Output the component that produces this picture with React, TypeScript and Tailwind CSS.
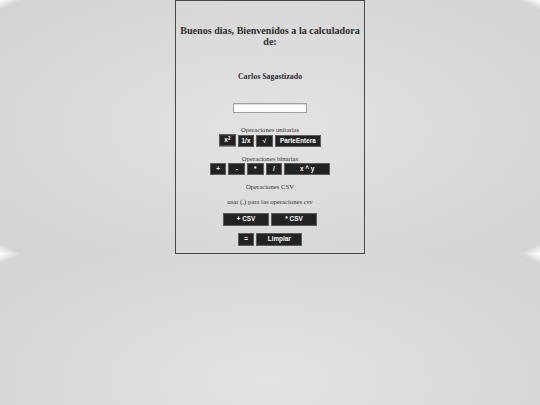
import React from "react";

const btn =
  "inline-flex items-center justify-center h-[12.6px] bg-[#222] border border-[#5c5c5c] text-white font-bold text-[6.4px] leading-none font-['Liberation_Sans',Arial,sans-serif]";

function Boton({
  ancho,
  extra = "",
  children,
}: {
  ancho: "chico" | "grande";
  extra?: string;
  children: React.ReactNode;
}) {
  return (
    <button
      type="button"
      className={(ancho === "chico" ? btn + " w-[16.6px]" : btn + " w-[46px]") + " " + extra}
    >
      {children}
    </button>
  );
}

export default function App() {
  return (
    <div className="min-h-screen w-full bg-[radial-gradient(#e3e3e3,#d4d4d4_96%,#ffffff)] bg-[length:100%_254px] font-['Liberation_Serif','Times_New_Roman',serif] text-[#2e2e2e]">
      <div className="mx-auto flex w-[190px] flex-col items-center border border-[#474747] pb-[7.6px] text-center">
        <h2 className="mt-[23.8px] px-[4px] text-[10.1px] font-bold leading-[11.6px]">
          Buenos dias, Bienvenidos a la calculadora de:
        </h2>

        <h3 className="mt-[24.2px] text-[7.9px] font-bold leading-[9px]">Carlos Sagastizado</h3>

        <input
          type="text"
          className="mt-[21.8px] h-[9.7px] w-[74.7px] border border-[#a0a0a0] bg-white shadow-[inset_0_0.5px_1px_rgba(0,0,0,0.25)] outline-none"
        />

        <p className="mt-[13.3px] text-[6.7px] leading-[7.7px] text-[#333]">Operaciones unitarias</p>
        <div className="mt-[1px] flex h-[12.6px] items-start justify-center gap-[2px] leading-none">
          <Boton ancho="chico" extra="-translate-y-[0.7px]">
            x<sup className="relative -top-[1.2px] text-[4.5px] leading-none">2</sup>
          </Boton>
          <Boton ancho="chico">1/x</Boton>
          <Boton ancho="chico">√</Boton>
          <Boton ancho="grande">ParteEntera</Boton>
        </div>

        <p className="mt-[7.4px] text-[6.7px] leading-[7.7px] text-[#333]">Operaciones binarias</p>
        <div className="mt-[0.4px] flex justify-center gap-[2px]">
          <Boton ancho="chico">+</Boton>
          <Boton ancho="chico">-</Boton>
          <Boton ancho="chico">*</Boton>
          <Boton ancho="chico">/</Boton>
          <Boton ancho="grande">x ^ y</Boton>
        </div>

        <p className="mt-[7.3px] text-[6.7px] leading-[7.7px] text-[#333]">Operaciones CSV</p>
        <p className="mt-[7.3px] text-[6.7px] leading-[7.7px] text-[#333]">usar (,) para las operaciones csv</p>

        <div className="mt-[8px] flex justify-center gap-[2px]">
          <Boton ancho="grande">+ CSV</Boton>
          <Boton ancho="grande">* CSV</Boton>
        </div>

        <div className="mt-[7.3px] flex justify-center gap-[2px]">
          <Boton ancho="chico">=</Boton>
          <Boton ancho="grande">Limpiar</Boton>
        </div>
      </div>
    </div>
  );
}
